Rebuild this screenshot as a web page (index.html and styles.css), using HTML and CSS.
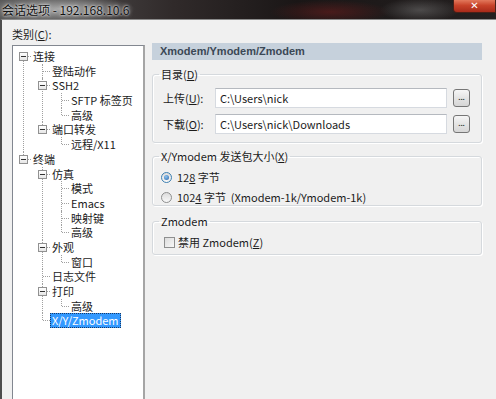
FILE: index.html
```html
<!DOCTYPE html>
<html lang="zh">
  <head>
    <meta charset="UTF-8" />
    <title>会话选项</title>
    <link rel="stylesheet" href="styles.css">
  </head>
  <body>
    <!-- Title bar -->
    <div class="titlebar">
      <span class="title">会话选项 - 192.168.10.6</span>
      <span class="close">✕</span>
    </div>

    <div class="dialog">
      <!-- Category tree -->
      <div class="left">
        <div class="cat-label">类别(<u>C</u>):</div>
        <div class="tree-box">
          <ul class="tree">
            <li class="first"><span class="toggle"></span><span class="label">连接</span>
              <ul>
                <li><span class="label">登陆动作</span></li>
                <li><span class="toggle"></span><span class="label">SSH2</span>
                  <ul>
                    <li><span class="label">SFTP 标签页</span></li>
                    <li><span class="label">高级</span></li>
                  </ul>
                </li>
                <li><span class="toggle"></span><span class="label">端口转发</span>
                  <ul>
                    <li><span class="label">远程/X11</span></li>
                  </ul>
                </li>
              </ul>
            </li>
            <li><span class="toggle"></span><span class="label">终端</span>
              <ul>
                <li><span class="toggle"></span><span class="label">仿真</span>
                  <ul>
                    <li><span class="label">模式</span></li>
                    <li><span class="label">Emacs</span></li>
                    <li><span class="label">映射键</span></li>
                    <li><span class="label">高级</span></li>
                  </ul>
                </li>
                <li><span class="toggle"></span><span class="label">外观</span>
                  <ul>
                    <li><span class="label">窗口</span></li>
                  </ul>
                </li>
                <li><span class="label">日志文件</span></li>
                <li><span class="toggle"></span><span class="label">打印</span>
                  <ul>
                    <li><span class="label">高级</span></li>
                  </ul>
                </li>
                <li><span class="label selected">X/Y/Zmodem</span></li>
              </ul>
            </li>
          </ul>
        </div>
      </div>

      <!-- Settings panel -->
      <div class="panel">
        <div class="panel-head">Xmodem/Ymodem/Zmodem</div>

        <fieldset class="group">
          <legend>目录(<u>D</u>)</legend>
          <div class="field-row">
            <span class="field-label">上传(<u>U</u>):</span>
            <span class="input">C:\Users\nick</span>
            <span class="browse">...</span>
          </div>
          <div class="field-row">
            <span class="field-label">下载(<u>O</u>):</span>
            <span class="input">C:\Users\nick\Downloads</span>
            <span class="browse">...</span>
          </div>
        </fieldset>

        <fieldset class="group group-size">
          <legend>X/Ymodem 发送包大小(<u>X</u>)</legend>
          <div class="option-row"><span class="radio checked"></span><span>12<u>8</u> 字节</span></div>
          <div class="option-row"><span class="radio"></span><span>102<u>4</u> 字节&nbsp; (Xmodem-1k/Ymodem-1k)</span></div>
        </fieldset>

        <fieldset class="group group-z">
          <legend>Zmodem</legend>
          <div class="option-row"><span class="checkbox"></span><span>禁用 Zmodem(<u>Z</u>)</span></div>
        </fieldset>
      </div>
    </div>
  </body>
</html>
```

FILE: styles.css
```css
* {
  box-sizing: border-box;
}
body {
  margin: 0;
  width: 496px;
  height: 399px;
  overflow: hidden;
  font-family: "Noto Sans CJK SC", "Liberation Sans", sans-serif;
  font-size: 11px;
  color: #1b1b1b;
  background-color: #f0f0f0;
}
u {
  text-decoration: underline;
  text-underline-offset: 1px;
}
/* Title bar */
.titlebar {
  height: 19px;
  display: flex;
  justify-content: space-between;
  align-items: flex-start;
  background: radial-gradient(ellipse 75px 14px at 60px 9px, #a8a8a8, rgba(140, 140, 140, 0.6) 60%, rgba(0, 0, 0, 0)),
    radial-gradient(ellipse 60px 12px at 330px 12px, rgba(110, 30, 30, 0.55), rgba(0, 0, 0, 0)),
    radial-gradient(ellipse 40px 12px at 420px 10px, rgba(120, 120, 120, 0.5), rgba(0, 0, 0, 0)),
    linear-gradient(to right, #5a5a5a 0, #302a2a 35%, #1a1616 60%, #242020 100%);
}
.title {
  padding-left: 2px;
  font-size: 12px;
  line-height: 19px;
  color: #111111;
  text-shadow: 0 0 4px #e0e0e0, 0 0 2px #ffffff;
}
.close {
  width: 43px;
  height: 13px;
  background: linear-gradient(#e2785c, #c8432a 45%, #a82a1a);
  border: 1px solid #4a2018;
  border-top: none;
  border-radius: 0 0 0 4px;
  color: #ffffff;
  font: bold 10px "DejaVu Sans", sans-serif;
  line-height: 11px;
  text-align: center;
}
/* Dialog body */
.dialog {
  display: flex;
  height: 380px;
  border-top: 1px solid #8a8a8a;
  border-left: 2px solid #4d4d4d;
  padding-left: 10px;
}
.left {
  width: 133px;
}
.cat-label {
  height: 25px;
  padding-top: 7px;
  line-height: 14px;
}
.tree-box {
  height: 360px;
  background-color: #ffffff;
  border: 1px solid #828790;
  border-right: 2px solid #a5a5a5;
  padding-top: 3px;
}
/* Tree view */
.tree,
.tree ul {
  list-style: none;
  margin: 0;
  padding: 0;
}
.tree ul {
  margin-left: 19px;
}
.tree li {
  position: relative;
}
.tree li::before {
  content: "";
  position: absolute;
  left: 10px;
  top: 0;
  bottom: 0;
  border-left: 1px dotted #a0a0a0;
}
.tree li:last-child::before {
  bottom: auto;
  height: 7px;
}
.tree li.first::before {
  top: 7px;
}
.tree li::after {
  content: "";
  position: absolute;
  left: 11px;
  top: 7px;
  width: 7px;
  border-top: 1px dotted #a0a0a0;
}
.label {
  display: block;
  width: max-content;
  position: relative;
  margin-left: 18px;
  padding: 0 2px;
  height: 14.7px;
  line-height: 14.7px;
  white-space: nowrap;
}
.label.selected {
  background-color: #3399ff;
  color: #ffffff;
  outline: 1px dotted #1a3a66;
  outline-offset: -1px;
}
.toggle {
  position: absolute;
  left: 6px;
  top: 3px;
  width: 9px;
  height: 9px;
  background: linear-gradient(#ffffff, #e6e6e6);
  border: 1px solid #919191;
  z-index: 1;
}
.toggle::after {
  content: "";
  position: absolute;
  left: 1px;
  top: 3px;
  width: 5px;
  border-top: 1px solid #333333;
}
/* Right panel */
.panel {
  width: 330px;
  margin-left: 7px;
  padding-top: 23px;
}
.panel-head {
  height: 17px;
  padding-left: 8px;
  background-color: #c6d1dc;
  color: #3b4855;
  font: bold 11px "Liberation Sans", Arial, sans-serif;
  line-height: 17px;
}
.group {
  margin: 7px 0 0;
  padding: 7px 10px 8px;
  border: 1px solid #d5d9dd;
  border-radius: 3px;
  box-shadow: inset 1px 1px 0 #ffffff, 1px 1px 0 #ffffff;
  min-width: 0;
}
.group legend {
  margin-left: -4px;
  padding: 0 2px;
  line-height: 14px;
}
.field-row {
  display: flex;
  align-items: center;
  height: 20px;
}
.field-row + .field-row {
  margin-top: 6px;
}
.field-label {
  width: 52px;
}
.input {
  width: 232px;
  height: 20px;
  padding-left: 4px;
  line-height: 18px;
  background-color: #ffffff;
  border: 1px solid #d6dae0;
  border-top-color: #b5b9bf;
}
.browse {
  width: 17px;
  height: 18px;
  margin-left: 6px;
  border: 1px solid #767676;
  border-radius: 3px;
  background: linear-gradient(#f6f6f6, #e4e4e4 50%, #d6d6d6);
  font: bold 8px "Liberation Sans", sans-serif;
  line-height: 16px;
  text-align: center;
  color: #333333;
}
.group-size {
  margin-top: 6px;
  padding: 6px 10px 0;
}
.group-z {
  margin-top: 8px;
  padding: 6px 10px 4px;
}
.option-row {
  display: flex;
  align-items: center;
  height: 16px;
}
.option-row + .option-row {
  margin-top: 4px;
}
.radio {
  width: 11px;
  height: 11px;
  margin: 0 5px 0 -2px;
  border: 1px solid #8e8f8f;
  border-radius: 50%;
  background: linear-gradient(#dcdcdc, #f8f8f8);
  position: relative;
}
.radio.checked {
  border-color: #3c7fb1;
}
.radio.checked::after {
  content: "";
  position: absolute;
  left: 2px;
  top: 2px;
  width: 5px;
  height: 5px;
  border-radius: 50%;
  background: radial-gradient(circle at 40% 35%, #8cc4f0, #2a63a8);
}
.checkbox {
  width: 11px;
  height: 11px;
  margin: 0 3px 0 1px;
  border: 1px solid #8e8f8f;
  background: linear-gradient(135deg, #dcdcdc, #f8f8f8);
}
```
